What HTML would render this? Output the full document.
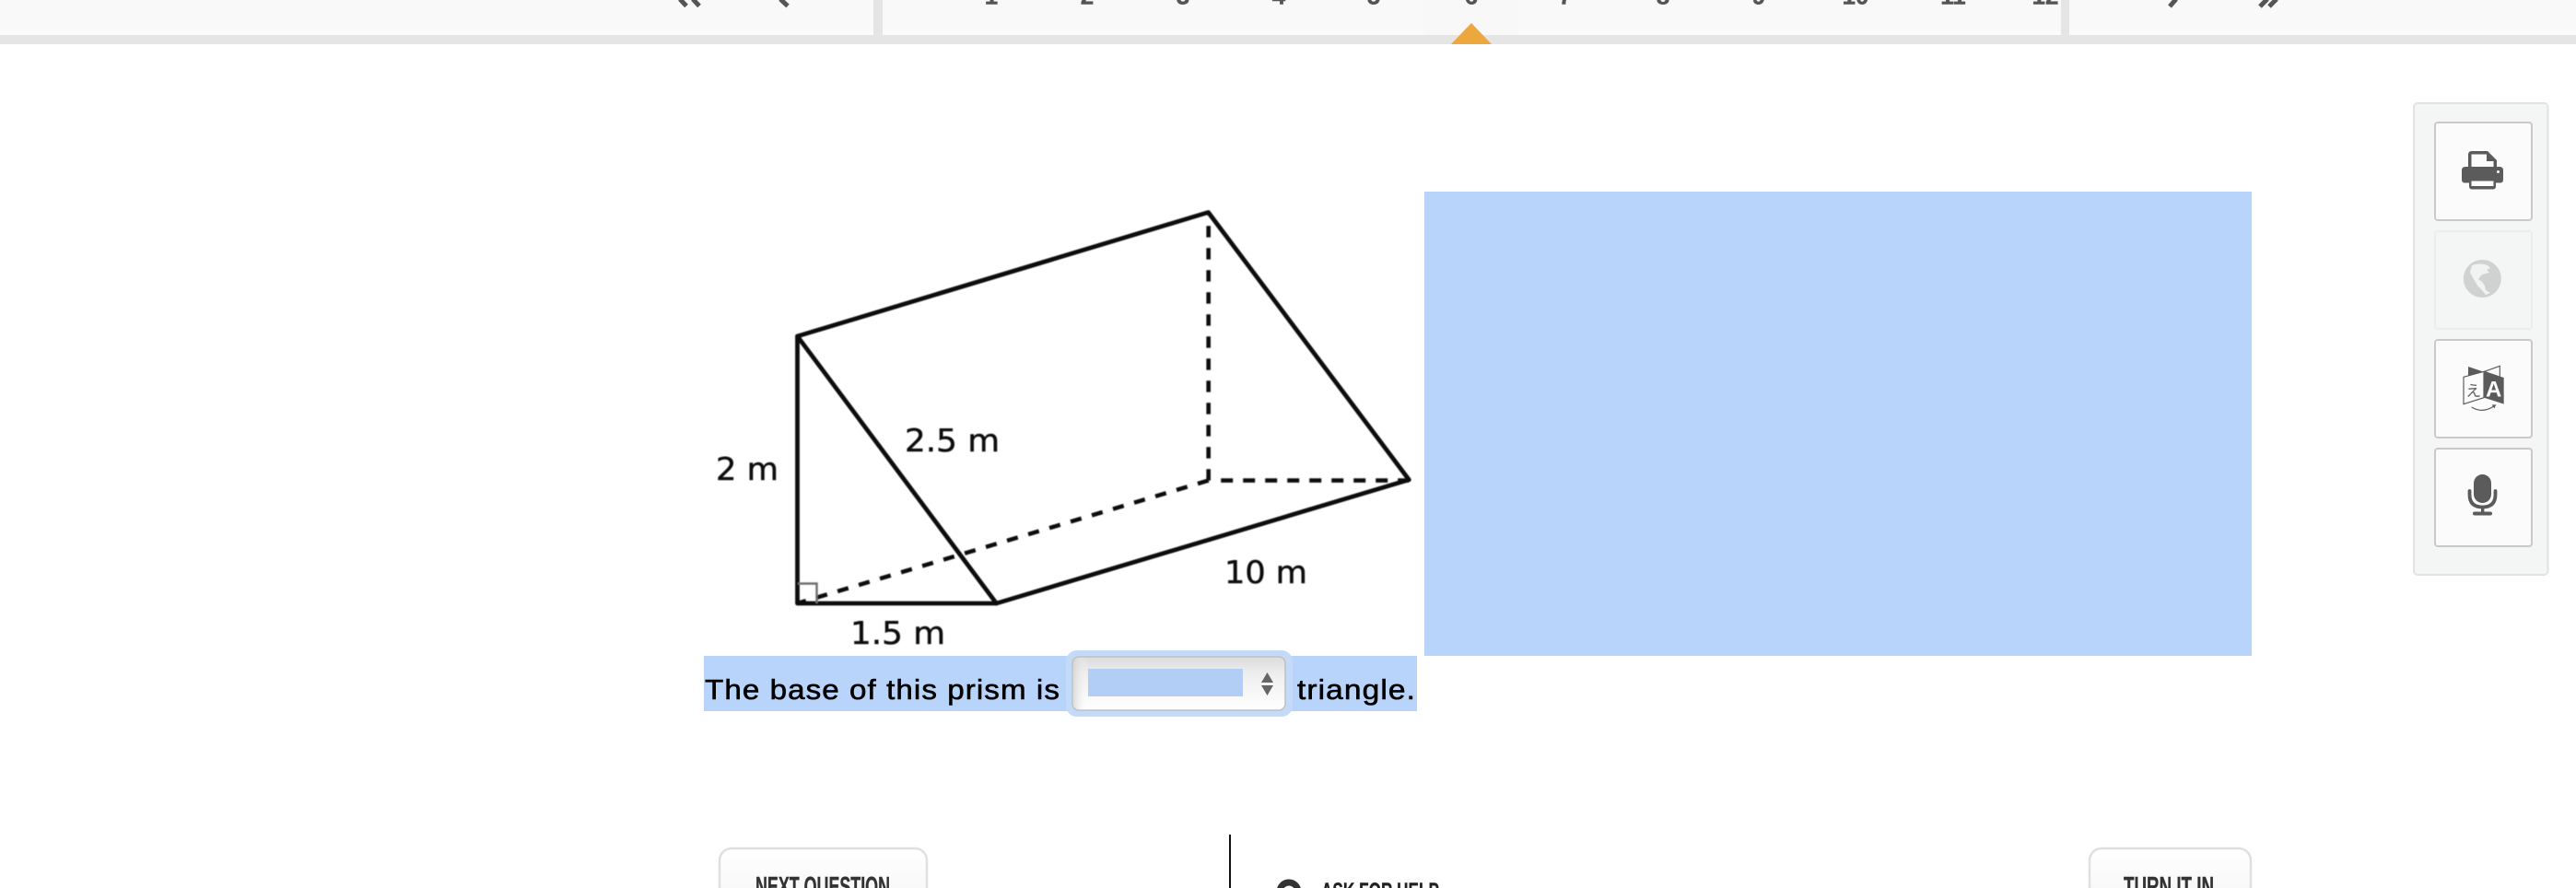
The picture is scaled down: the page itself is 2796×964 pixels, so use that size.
<!DOCTYPE html>
<html lang="en">
<head>
<meta charset="utf-8">
<title>Question</title>
<style>
html,body{margin:0;padding:0;background:#fff;width:2796px;height:964px;overflow:hidden}
svg{display:block;position:absolute;left:0;top:0}
</style>
</head>
<body>
<svg width="2796" height="964" viewBox="0 0 2796 964" xmlns="http://www.w3.org/2000/svg">
<defs>
<linearGradient id="sel" x1="0" y1="0" x2="0" y2="1"><stop offset="0" stop-color="#dcdcdc"/><stop offset=".35" stop-color="#efefef"/><stop offset="1" stop-color="#fff"/></linearGradient>
<linearGradient id="selL" x1="0" y1="0" x2="1" y2="0"><stop offset="0" stop-color="#cfcfcf" stop-opacity=".7"/><stop offset="1" stop-color="#fff" stop-opacity="0"/></linearGradient>
<linearGradient id="btn" x1="0" y1="0" x2="0" y2="1"><stop offset="0" stop-color="#ffffff"/><stop offset="1" stop-color="#f3f3f3"/></linearGradient>
<filter id="soft"><feGaussianBlur stdDeviation=".45"/></filter>
</defs>

<!-- top navigation -->
<rect x="0" y="0" width="2796" height="38" fill="#f9f9f9"/>
<rect x="0" y="34" width="2796" height="4" fill="#fbfbfb"/>
<rect x="1545" y="0" width="103" height="38" fill="#f8f8f8"/>
<rect x="0" y="38" width="2796" height="10" fill="#e5e5e5"/>
<rect x="948" y="0" width="10" height="40" fill="#e5e5e5"/>
<rect x="2237" y="0" width="9" height="40" fill="#e5e5e5"/>
<path d="M1597 25 L1619 48 L1575 48 Z" fill="#eca73f"/>

<g fill="none" stroke="#555" stroke-width="5">
<path d="M738 -1 L745 6.5 M752 -1 L759 6.5 M847 -1 L855 6.5"/>
<path d="M2362 -1 L2355 7 M2461 -1 L2453 7 M2471 -1 L2463 7"/>
</g>
<g font-family="'Liberation Sans',sans-serif" font-size="26" font-weight="bold" fill="#555" stroke="#555" stroke-width=".4" text-anchor="middle">
<text x="1076" y="4.500">1</text>
<text x="1180" y="4.500">2</text>
<text x="1284" y="4.500">3</text>
<text x="1388" y="4.500">4</text>
<text x="1491" y="4.500">5</text>
<text x="1597" y="4.500">6</text>
<text x="1699" y="4.500">7</text>
<text x="1805" y="4.500">8</text>
<text x="1909" y="4.500">9</text>
<text x="2014" y="4.500">10</text>
<text x="2120" y="4.500">11</text>
<text x="2220" y="4.500">12</text>
</g>

<!-- prism image -->
<g filter="url(#soft)">
<g fill="none" stroke="#111" stroke-width="4.800" stroke-linejoin="round" stroke-linecap="round">
<path d="M865.500 365 L1311.500 230.500 L1529.300 520.800 L1081.500 655 L865.500 655 Z"/>
<path d="M865.500 365 L1081.500 655"/>
</g>
<g fill="none" stroke="#111" stroke-width="4.600" stroke-linecap="butt">
<path d="M1311.700 521.600 L1311.700 230.600" stroke-dasharray="12.300 11.700"/>
<path d="M1311.700 521.600 L1529 521.600" stroke-dasharray="0 13.500 13 11 13 11 13 11 13 11 13 11 13 11 13 11 13 11 13 11" />
<path d="M1311.700 521.600 L866 654.800" stroke-dasharray="12.200 11.800"/>
</g>
<path d="M866 633.500 L886.500 633.500 L886.500 655" fill="none" stroke="#6e6e6e" stroke-width="2.400"/>
<g font-family="'DejaVu Sans',sans-serif" font-size="34" fill="#111" stroke="#111" stroke-width=".5">
<text x="982" y="490" textLength="103" lengthAdjust="spacingAndGlyphs">2.5 m</text>
<text x="777" y="521" textLength="68" lengthAdjust="spacingAndGlyphs">2 m</text>
<text x="1329" y="633" textLength="90" lengthAdjust="spacingAndGlyphs">10 m</text>
<text x="923" y="699" textLength="103" lengthAdjust="spacingAndGlyphs">1.5 m</text>
</g>
</g>

<!-- selection highlights -->
<rect x="1546" y="208" width="898" height="504" fill="#b9d4fb"/>
<rect x="764" y="712" width="774" height="60" fill="#b9d4fb"/>
<text x="765" y="759" font-family="'Liberation Sans',sans-serif" font-size="31" fill="#000" stroke="#000" stroke-width=".6" letter-spacing="1" textLength="386" lengthAdjust="spacingAndGlyphs">The base of this prism is</text>
<text x="1408" y="759" font-family="'Liberation Sans',sans-serif" font-size="31" fill="#000" stroke="#000" stroke-width=".6" letter-spacing="1" textLength="129" lengthAdjust="spacingAndGlyphs">triangle.</text>

<!-- select -->
<rect x="1157" y="706" width="246" height="72" rx="12" fill="#c3dbf9"/>
<rect x="1164" y="713" width="231" height="58" rx="7" fill="url(#sel)" stroke="#c0c0c0" stroke-width="1.500"/>
<rect x="1165" y="714" width="16" height="56" rx="6" fill="url(#selL)"/>
<rect x="1181" y="726" width="168" height="30" fill="#b2cef5"/>
<path d="M1375.500 730 L1382 741 L1369 741 Z M1369 744 L1382 744 L1375.500 755 Z" fill="#666"/>

<!-- side toolbar -->
<rect x="2620" y="112" width="145.500" height="512" rx="4" fill="#f4f5f5" stroke="#e2e2e2" stroke-width="2"/>
<rect x="2643" y="133" width="105" height="106" rx="3" fill="#fbfbfb" stroke="#c9c9c9" stroke-width="2"/>
<rect x="2643" y="251" width="105" height="106" rx="3" fill="#f4f5f5" stroke="#ececec" stroke-width="2"/>
<rect x="2643" y="369" width="105" height="106" rx="3" fill="#fbfbfb" stroke="#c9c9c9" stroke-width="2"/>
<rect x="2643" y="487" width="105" height="106" rx="3" fill="#fbfbfb" stroke="#c9c9c9" stroke-width="2"/>

<!-- printer icon -->
<path d="M2683 164 L2700 164 L2710 174 L2710 181 L2713 181 Q2717 181 2717 185 L2717 195 Q2717 198.500 2714 198.500 L2709 198.500 L2709 202 Q2709 205.500 2706 205.500 L2683 205.500 Q2680 205.500 2680 202 L2680 198.500 L2675 198.500 Q2672 198.500 2672 195 L2672 185 Q2672 181 2676 181 L2679 181 L2679 168 Q2679 164 2683 164 Z" fill="#5b5b5b"/>
<path d="M2682.500 167.500 L2699 167.500 L2699 175 L2706.500 175 L2706.500 181 L2682.500 181 Z" fill="#fbfbfb"/>
<rect x="2682.500" y="196.500" width="24" height="5.500" fill="#fbfbfb"/>
<circle cx="2711.500" cy="186.500" r="1.500" fill="#fbfbfb"/>

<!-- globe icon -->
<circle cx="2694.300" cy="302.500" r="20.500" fill="#d0d1d1"/>
<path d="M2683 288 Q2692 285 2700 288 L2703 291 L2699 293 L2702 296 L2697 297 L2693 299 L2690 303 L2694 306 L2697 310 L2698 315 L2703 318 L2698 320 L2693 314 L2689 310 L2685 303 L2681 296 Z" fill="#f1f2f2"/>

<!-- translate icon -->
<g transform="translate(2660 390) scale(.3333)">
<path d="M57 24 L105 40 L57 54 Z" fill="#5b5b5b"/>
<path d="M110 40 L160 22 L160 56" fill="none" stroke="#5b5b5b" stroke-width="3.500"/>
<path d="M42 58 L108 40 L108 125 L42 146 Z" fill="#fbfbfb" stroke="#5b5b5b" stroke-width="3.500"/>
<path d="M108 38 L173 60 L173 146 L108 125 Z" fill="#5b5b5b"/>
<text x="140" y="122" text-anchor="middle" font-family="'Liberation Sans',sans-serif" font-weight="bold" font-size="72" fill="#fbfbfb">A</text>
<text x="74" y="120" text-anchor="middle" font-family="'Noto Sans CJK JP',sans-serif" font-size="50" fill="#5b5b5b">え</text>
<path d="M68 156 Q105 178 142 152" fill="none" stroke="#5b5b5b" stroke-width="3.500"/>
<path d="M134 148 L148 148 L142 160 Z" fill="#5b5b5b"/>
</g>

<!-- mic icon -->
<rect x="2685" y="515" width="19" height="31" rx="9.500" fill="#5b5b5b"/>
<path d="M2680.500 533 L2680.500 537 Q2680.500 550.500 2694.500 550.500 Q2708.500 550.500 2708.500 537 L2708.500 533" fill="none" stroke="#5b5b5b" stroke-width="3.800" stroke-linecap="round"/>
<rect x="2693" y="550" width="3.400" height="7" fill="#5b5b5b"/>
<rect x="2684" y="555.500" width="21" height="4" rx="2" fill="#5b5b5b"/>

<!-- bottom controls -->
<rect x="781" y="921" width="225" height="80" rx="13" fill="url(#btn)" stroke="#e0e0e0" stroke-width="2.500"/>
<text x="820" y="972" font-family="'Liberation Sans Narrow','Liberation Sans',sans-serif" font-weight="bold" font-size="29" fill="#333" stroke="#333" stroke-width=".4" textLength="146" lengthAdjust="spacingAndGlyphs">NEXT QUESTION</text>
<rect x="1334" y="906" width="2" height="60" fill="#111"/>
<circle cx="1399" cy="968" r="10" fill="none" stroke="#333" stroke-width="7"/>
<text x="1434" y="976" font-family="'Liberation Sans Narrow','Liberation Sans',sans-serif" font-weight="bold" font-size="25" fill="#222" stroke="#222" stroke-width=".4" textLength="128" lengthAdjust="spacingAndGlyphs">ASK FOR HELP</text>
<rect x="2268" y="921" width="175" height="80" rx="13" fill="url(#btn)" stroke="#e0e0e0" stroke-width="2.500"/>
<text x="2305" y="972" font-family="'Liberation Sans Narrow','Liberation Sans',sans-serif" font-weight="bold" font-size="29" fill="#333" stroke="#333" stroke-width=".4" textLength="98" lengthAdjust="spacingAndGlyphs">TURN IT IN</text>
</svg>
</body>
</html>
